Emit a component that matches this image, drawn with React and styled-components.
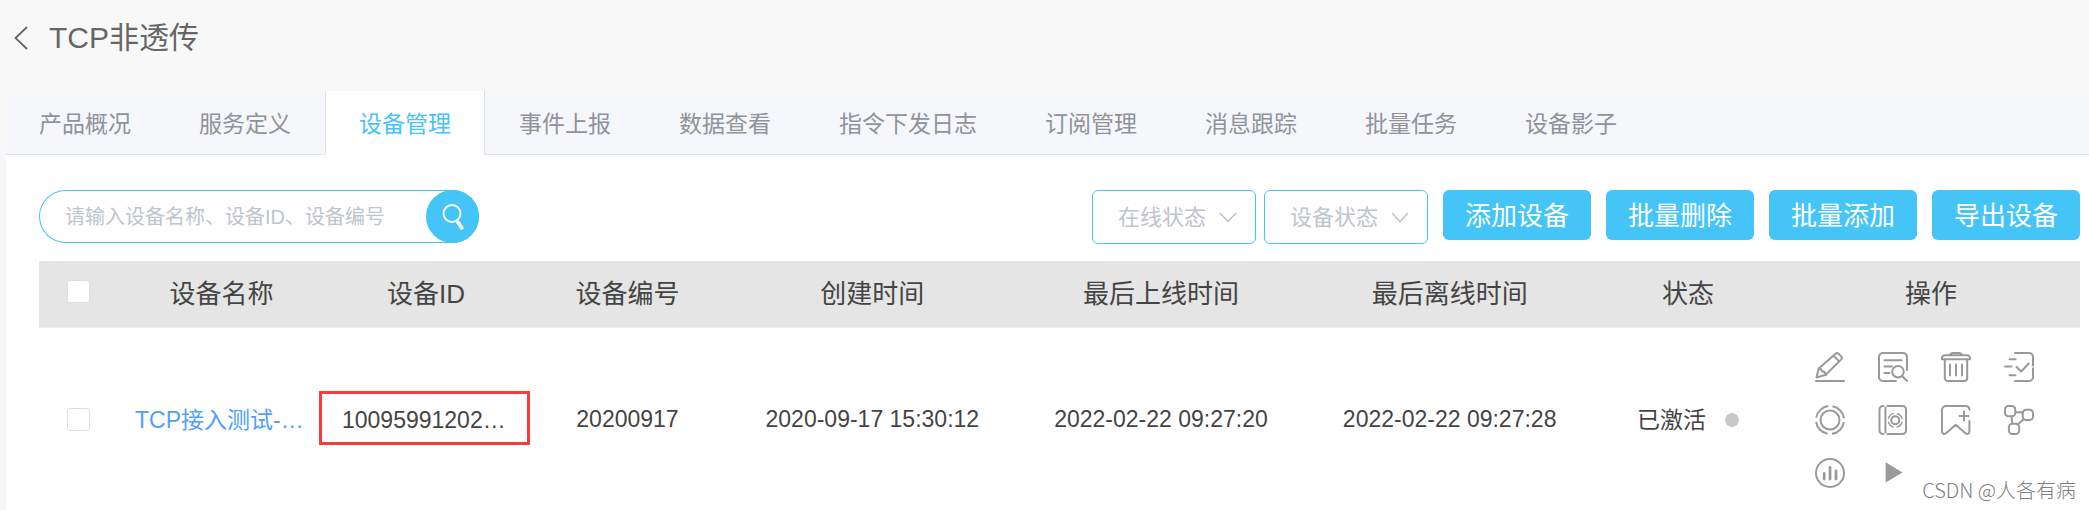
import React from "react"
import styled, { createGlobalStyle } from "styled-components"

const GlobalStyle = createGlobalStyle`
  * {
    box-sizing: border-box;
  }
  body {
    margin: 0;
    background: #f8f8f8;
    color: #444;
    font-family: "Liberation Sans", "Noto Sans CJK SC", sans-serif;
    font-size: 23px;
  }
  button, input, select {
    font-family: inherit;
  }
`

const Page = styled.div`
  position: relative;
  overflow: hidden;
`

const Header = styled.header`
  display: flex;
  align-items: center;
  gap: 20px;
  height: 91px;
  padding: 0 14px 16px;
`

const BackLink = styled.a`
  display: flex;
  color: #666;
`

const Title = styled.h1`
  margin: 0;
  font-size: 30px;
  font-weight: 400;
  line-height: 40px;
  color: #666;
`

const Panel = styled.main`
  margin-left: 6px;
  background: #fff;
`

const Tabs = styled.nav`
  display: flex;
  background: #f5f7fb;
  box-shadow: inset 0 -1px #e0e3ea;
`

const Tab = styled.a`
  height: 64px;
  padding: 0 33px;
  border: solid ${props => (props.$active ? "#dcdfe6" : "transparent")};
  border-width: 0 1px;
  background: ${props => (props.$active ? "#fff" : "none")};
  color: ${props => (props.$active ? "#45c5f7" : "#909399")};
  line-height: 66px;
  text-decoration: none;
  white-space: nowrap;

  &:first-child {
    margin-left: -1px;
  }
`

const Content = styled.section`
  padding: 35px 9px 0 33px;
`

const Toolbar = styled.div`
  display: flex;
  justify-content: space-between;
  margin-bottom: 17px;
`

const SearchBox = styled.form`
  display: flex;
  width: 440px;
  height: 53px;
  border-radius: 27px;
  box-shadow: inset 0 0 0 1px #45c5f7;
`

const SearchInput = styled.input`
  flex: 1;
  min-width: 0;
  padding: 2px 0 0 26px;
  border: 0;
  outline: 0;
  background: none;
  font-size: 20px;

  &::placeholder {
    color: #c0c4cc;
  }
`

const SearchButton = styled.button`
  display: flex;
  align-items: center;
  justify-content: center;
  width: 53px;
  height: 53px;
  padding: 0;
  border: 0;
  border-radius: 50%;
  background: #45c5f7;
  color: #fff;
`

const Actions = styled.div`
  display: flex;
  gap: 15px;
`

const Filters = styled.div`
  display: flex;
  gap: 8px;
`

const SelectWrap = styled.div`
  position: relative;

  svg {
    position: absolute;
    top: 22px;
    right: 19px;
    color: #c0c4cc;
    pointer-events: none;
  }
`

const Select = styled.select`
  appearance: none;
  width: 164px;
  height: 54px;
  padding: 0 40px 0 25px;
  border: 1px solid #45c5f7;
  border-radius: 6px;
  background: #fff;
  color: #c0c4cc;
  font-size: 22px;
`

const Button = styled.button`
  height: 50px;
  padding: 0 22px 4px;
  border: 0;
  border-radius: 6px;
  background: #45c5f7;
  color: #fff;
  font-size: 26px;
  white-space: nowrap;
`

const Table = styled.table`
  width: 100%;
  border-collapse: collapse;
  table-layout: fixed;
`

const Th = styled.th`
  height: 66px;
  padding: 0 0 4px;
  border-bottom: 1px solid #ebeef5;
  background: #e5e5e5;
  font-size: 26px;
  font-weight: 400;
`

const Td = styled.td`
  position: relative;
  padding: 0;
  text-align: center;
`

const Ellipsis = styled.div`
  padding: 0 17px;
  overflow: hidden;
  line-height: 28px;
  text-align: left;
  text-overflow: ellipsis;
  white-space: nowrap;
`

const DeviceLink = styled.a`
  color: #50a0fa;
  text-decoration: none;
`

const Highlight = styled.span`
  position: absolute;
  inset: 63px -3px 67px -6px;
  border: 3px solid #fc3a3a;
`

const Checkbox = styled.input`
  appearance: none;
  display: block;
  width: 23px;
  height: 23px;
  margin: 0 auto;
  border: 1px solid #dcdfe6;
  border-radius: 3px;
  background: #fff;
`

const Status = styled.span`
  display: inline-flex;
  align-items: center;
  gap: 19px;
  line-height: 28px;
`

const Dot = styled.i`
  width: 14px;
  height: 14px;
  border-radius: 50%;
  background: #c8c8c8;
`

const Operations = styled.div`
  display: grid;
  grid-template-columns: repeat(4, 30px);
  gap: 23px 33px;
  padding: 24px 33px;
`

const IconButton = styled.button`
  display: flex;
  padding: 0;
  border: 0;
  background: none;
  color: #999;
`

const Watermark = styled.div`
  position: absolute;
  right: 13px;
  bottom: 8px;
  color: #808080;
  font-family: "Noto Sans CJK SC", sans-serif;
  font-size: 20px;
  font-weight: 300;
  line-height: 28px;
`

const Icon = ({ children }) => (
  <svg
    width="30"
    height="30"
    viewBox="0 0 30 30"
    fill="none"
    stroke="currentColor"
    strokeWidth="2"
    strokeLinecap="round"
    strokeLinejoin="round"
  >
    {children}
  </svg>
)

const Arrow = () => (
  <svg width="18" height="11" viewBox="0 0 18 11" fill="none" stroke="currentColor" strokeWidth="1.6">
    <path d="M1 1l8 8.5L17 1" />
  </svg>
)

const operations = [
  {
    name: "编辑",
    icon: (
      <>
        <path d="M1.5 25.5l2.3-9L20.5 1.8q1.5-1.3 3 0l2.7 2.6q1.3 1.5 0 3L10.8 22.8z" />
        <path d="M18.5 3.8l5.7 5.6M3.8 16.5q3 .2 3 2.8q3.4-.2 4 3.5M1 29h28" />
      </>
    ),
  },
  {
    name: "详情",
    icon: (
      <>
        <path d="M18 29H5a4 4 0 0 1-4-4V5a4 4 0 0 1 4-4h20a4 4 0 0 1 4 4v13" />
        <path d="M6.5 8.3h17M6.5 14.6H14M6.5 21h5M24.5 24.5L29 29" />
        <circle cx="20" cy="19.7" r="5.8" />
      </>
    ),
  },
  {
    name: "删除",
    icon: (
      <>
        <path d="M1 7.3V6a2.8 2.8 0 0 1 2.8-2.8h22.4A2.8 2.8 0 0 1 29 6v1.3zM9 3q.5-2 3-2h6q2.5 0 3 2" />
        <path d="M3.8 7.5V26a3 3 0 0 0 3 3h16.4a3 3 0 0 0 3-3V7.5M9 12.5v11M15 12.5v11M21 12.5v11" />
      </>
    ),
  },
  {
    name: "任务",
    icon: (
      <>
        <path d="M11 1h14a4 4 0 0 1 4 4v8.5M29 16.2V25a4 4 0 0 1-4 4H11" />
        <path d="M5.5 7.2h6M1 14.4h6.5M5.5 23.3h6M12.6 15l4.6 4.500 7.500-8" />
      </>
    ),
  },
  {
    name: "服务",
    icon: (
      <>
        <circle cx="15" cy="15" r="14" strokeDasharray="17.6 4.391" strokeDashoffset="-2.2" strokeLinecap="butt" />
        <circle cx="15" cy="15" r="9.5" />
      </>
    ),
  },
  {
    name: "日志",
    icon: (
      <>
        <path d="M5.5 1H5a3.5 3.5 0 0 0-3.5 3.5v21A3.5 3.5 0 0 0 5 29h.5M9.5 1h15a3.5 3.5 0 0 1 3.5 3.5v21a3.5 3.5 0 0 1-3.5 3.5h-15M7.4 2.5v25" />
        <circle cx="17.2" cy="15.3" r="4" />
        <circle cx="17.2" cy="15.3" r="7" strokeWidth="1.4" strokeDasharray="8 2.996" strokeDashoffset="-1.5" strokeLinecap="butt" />
      </>
    ),
  },
  {
    name: "订阅",
    icon: (
      <path d="M28.5 4.8A4 4 0 0 0 24.7 1H5a4 4 0 0 0-4 4v21.5a2.3 2.3 0 0 0 4 1.7l9.7-8.4 9.7 8.4a2.3 2.3 0 0 0 4-1.7V16M23 6.5v9M18.5 11h9" />
    ),
  },
  {
    name: "拓扑",
    icon: (
      <>
        <rect x="1" y="1" width="10.3" height="10.3" rx="3.5" />
        <rect x="18.7" y="4.8" width="10.3" height="10.3" rx="3.5" />
        <rect x="4.9" y="18.7" width="10.3" height="10.3" rx="3.5" />
        <path d="M11.5 7.3H19M19.3 14.5l-5 4.5M7.5 11.5l.8 7" />
      </>
    ),
  },
  {
    name: "统计",
    icon: (
      <>
        <circle cx="15" cy="15" r="14" />
        <path d="M9.2 15.5V21M15 9.5V21M21 13v8" strokeWidth="2.8" />
      </>
    ),
  },
  {
    name: "启动",
    icon: <path d="M7.7 4.3v20.2l16.8-10.1z" fill="currentColor" stroke="none" />,
  },
]

const tabs = [
  "产品概况",
  "服务定义",
  "设备管理",
  "事件上报",
  "数据查看",
  "指令下发日志",
  "订阅管理",
  "消息跟踪",
  "批量任务",
  "设备影子",
]

const buttons = ["添加设备", "批量删除", "批量添加", "导出设备"]

// the three time columns share whatever width is left
const columns = [
  { title: "设备名称", width: 207 },
  { title: "设备ID", width: 202 },
  { title: "设备编号", width: 201 },
  { title: "创建时间" },
  { title: "最后上线时间" },
  { title: "最后离线时间" },
  { title: "状态", width: 188 },
  { title: "操作", width: 298 },
]

const devices = [
  {
    name: "TCP接入测试-…",
    id: "10095991202…",
    number: "20200917",
    created: "2020-09-17 15:30:12",
    online: "2022-02-22 09:27:20",
    offline: "2022-02-22 09:27:28",
    status: "已激活",
  },
]

export default function App() {
  return (
    <Page>
      <GlobalStyle />
      <Header>
        <BackLink href="#back" aria-label="返回">
          <svg width="15" height="24" viewBox="0 0 15 24" fill="none" stroke="currentColor" strokeWidth="1.8">
            <path d="M13 1L1.5 12 13 23" />
          </svg>
        </BackLink>
        <Title>TCP非透传</Title>
      </Header>
      <Panel>
        <Tabs>
          {tabs.map(tab => (
            <Tab key={tab} href={`#${tab}`} $active={tab === "设备管理"}>
              {tab}
            </Tab>
          ))}
        </Tabs>
        <Content>
          <Toolbar>
            <SearchBox>
              <SearchInput
                type="text"
                aria-label="搜索设备"
                placeholder="请输入设备名称、设备ID、设备编号"
              />
              <SearchButton type="button" aria-label="搜索">
                <svg width="24" height="28" viewBox="0 0 24 28" fill="none" stroke="currentColor" strokeLinecap="round">
                  <circle cx="11" cy="10.5" r="8.5" strokeWidth="1.8" />
                  <path d="M15.5 17.5l1.2 1.6" strokeWidth="2" />
                  <path d="M17 19.5l3.8 5.5" strokeWidth="3.6" />
                </svg>
              </SearchButton>
            </SearchBox>
            <Actions>
              <Filters>
                {["在线状态", "设备状态"].map(label => (
                  <SelectWrap key={label}>
                    <Select aria-label={label}>
                      <option>{label}</option>
                    </Select>
                    <Arrow />
                  </SelectWrap>
                ))}
              </Filters>
              {buttons.map(label => (
                <Button key={label} type="button">
                  {label}
                </Button>
              ))}
            </Actions>
          </Toolbar>
          <Table>
            <colgroup>
              <col width={79} />
              {columns.map(col => (
                <col key={col.title} width={col.width} />
              ))}
            </colgroup>
            <thead>
              <tr>
                <Th>
                  <Checkbox type="checkbox" aria-label="全选" />
                </Th>
                {columns.map(col => (
                  <Th key={col.title}>{col.title}</Th>
                ))}
              </tr>
            </thead>
            <tbody>
              {devices.map(device => (
                <tr key={device.number}>
                  <Td>
                    <Checkbox type="checkbox" aria-label={device.name} />
                  </Td>
                  <Td>
                    <Ellipsis>
                      <DeviceLink href="#device">{device.name}</DeviceLink>
                    </Ellipsis>
                  </Td>
                  <Td>
                    <Ellipsis>{device.id}</Ellipsis>
                    <Highlight />
                  </Td>
                  <Td>{device.number}</Td>
                  <Td>{device.created}</Td>
                  <Td>{device.online}</Td>
                  <Td>{device.offline}</Td>
                  <Td>
                    <Status>
                      {device.status}
                      <Dot />
                    </Status>
                  </Td>
                  <Td>
                    <Operations>
                      {operations.map(op => (
                        <IconButton key={op.name} type="button" aria-label={op.name}>
                          <Icon>{op.icon}</Icon>
                        </IconButton>
                      ))}
                    </Operations>
                  </Td>
                </tr>
              ))}
            </tbody>
          </Table>
        </Content>
      </Panel>
      <Watermark>CSDN @人各有病</Watermark>
    </Page>
  )
}
